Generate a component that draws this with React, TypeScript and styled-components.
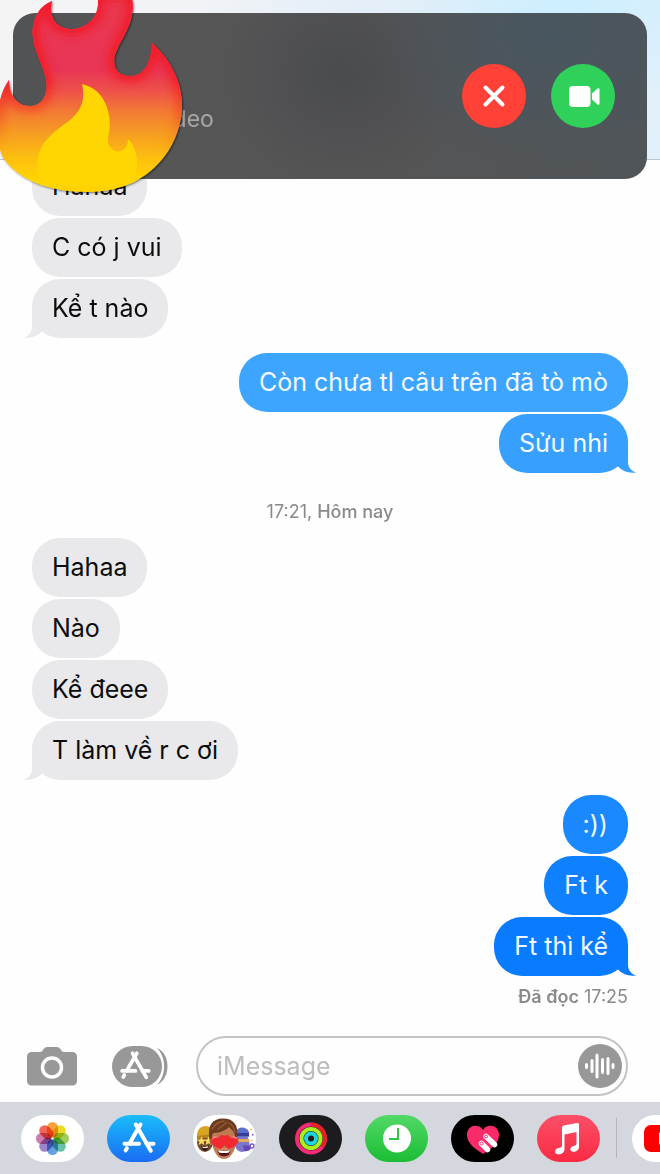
import React from "react";
import styled, { createGlobalStyle } from "styled-components";

const GlobalStyle = createGlobalStyle`
  * { box-sizing: border-box; }
  body {
    margin: 0;
    background: #fefefe;
    font-family: Inter, "Liberation Sans", sans-serif;
    overflow-x: hidden;
  }
  button { border: 0; padding: 0; background: none; cursor: pointer; }
`;

const Screen = styled.div`
  position: relative;
  min-height: 100vh;
  display: flex;
  flex-direction: column;
  overflow: hidden;
`;

const NavBar = styled.header`
  position: absolute;
  top: 0;
  left: 0;
  right: 0;
  height: 160px;
  border-bottom: 1px solid #bcc5ce;
  background:
    radial-gradient(ellipse 26% 70% at 86% 0, #cbeeff 0, rgba(203, 238, 255, 0) 100%),
    linear-gradient(90deg, #f4f4f5 0, #f1f3f6 30%, #e3eef8 55%, #e1f0fb 100%);
`;

const CallBanner = styled.section`
  position: absolute;
  z-index: 2;
  top: 13px;
  left: 13px;
  right: 13px;
  height: 166px;
  padding: 0 32px 0 27px;
  display: flex;
  align-items: center;
  gap: 25px;
  border-radius: 22px;
  background:
    radial-gradient(ellipse 28% 80% at 84% 12%, #48565f 0, rgba(72, 86, 95, 0) 100%),
    radial-gradient(ellipse 20% 70% at 52% 36%, #4a4b4f 0, rgba(74, 75, 79, 0) 100%),
    linear-gradient(90deg, #525355 0, #565657 20%, #555555 60%, #505559 100%);
`;

const CallKind = styled.p`
  flex: 1;
  margin: 46px 0 0;
  font-size: 23px;
  line-height: 30px;
  color: #a5a5a6;
`;

const CallButton = styled.button<{ $color: string }>`
  width: 64px;
  height: 64px;
  border-radius: 50%;
  background: ${(p) => p.$color};
  svg { display: block; }
`;

const FlameSticker = styled.svg`
  position: absolute;
  z-index: 3;
  top: 0;
  left: 0;
  pointer-events: none;
`;

const Thread = styled.main`
  flex: 1;
  padding: 157px 32px 0;
  display: flex;
  flex-direction: column;
`;

const Group = styled.div<{ $mine?: boolean }>`
  display: flex;
  flex-direction: column;
  align-items: ${(p) => (p.$mine ? "flex-end" : "flex-start")};
  gap: 2px;
  margin-bottom: 15px;
`;

const BubbleBox = styled.div<{ $tone: string; $mine?: boolean }>`
  position: relative;
  padding: 0 20px;
  border-radius: 28px;
  font-size: 25px;
  line-height: 59px;
  white-space: nowrap;
  background: ${(p) => p.$tone};
  color: ${(p) => (p.$mine ? "#f4faff" : "#0c0c0d")};
`;

const Tail = styled.svg<{ $mine?: boolean }>`
  position: absolute;
  bottom: 0;
  ${(p) => (p.$mine ? "right: -8px; transform: scaleX(-1);" : "left: -8px;")}
`;

const Stamp = styled.p`
  margin: 13px 0 15px;
  text-align: center;
  font-size: 18px;
  line-height: 22px;
  color: #8a8a8d;
  b { font-weight: 500; }
`;

const Receipt = styled.p`
  margin: -5px 0 0;
  text-align: right;
  font-size: 18px;
  line-height: 22px;
  color: #8a8a8d;
  b { font-weight: 600; }
`;

const Composer = styled.form`
  display: flex;
  align-items: center;
  padding: 0 32px 6px 27px;
`;

const ToolButton = styled.button`
  margin-right: 35px;
  svg { display: block; }
  & + & { margin-right: 28px; }
`;

const Field = styled.label`
  flex: 1;
  min-width: 0;
  height: 60px;
  padding: 0 4px 0 19px;
  display: flex;
  align-items: center;
  border: 2px solid #c3c3c5;
  border-radius: 30px;
`;

const FieldInput = styled.input`
  flex: 1;
  min-width: 0;
  border: 0;
  outline: 0;
  padding: 0;
  background: none;
  font: inherit;
  font-size: 25px;
  line-height: 32px;
  color: #0c0c0d;
  &::placeholder { color: #bdbdbf; opacity: 1; }
`;

const VoiceButton = styled.button`
  width: 44px;
  height: 44px;
  svg { display: block; }
`;

const AppStrip = styled.nav`
  display: flex;
  align-items: center;
  gap: 23px;
  height: 72px;
  padding-left: 21px;
  overflow: hidden;
  background: #d5d7de;
`;

const AppPill = styled.button<{ $fill: string }>`
  flex: none;
  width: 63px;
  height: 47px;
  border-radius: 24px;
  overflow: hidden;
  background: ${(p) => p.$fill};
  svg { display: block; }
`;

const Divider = styled.span`
  flex: none;
  width: 1px;
  height: 40px;
  margin: 0 -8px 0 -7px;
  background: #b3b5bb;
`;

type BubbleProps = { text: string; mine?: boolean; tone?: string; tail?: boolean };

function Bubble({ text, mine, tone = "#e9e9eb", tail }: BubbleProps) {
  return (
    <BubbleBox $tone={tone} $mine={mine}>
      {tail && (
        <Tail $mine={mine} width="28" height="30" viewBox="0 0 28 30" aria-hidden="true">
          <path d="M8 0V19C8 24 5 28 0 29.4C7 30.6 14 28 18 23.5L28 0Z" fill={tone} />
        </Tail>
      )}
      {text}
    </BubbleBox>
  );
}

function Flame() {
  const body =
    "M97 -6C102 14 89 29 70 29C57 28 48 18 52 1C39 6 32 19 32.500 34C33 52 45 66 46.500 84C47 98 40 106 30 106C17 106 9 95 9 80C2 90 -2 103 -2 118C-3 138 -1 151 4 159C20 181 51 192 88 192C122 192 148 178 164 157C176 141 182 123 182 103C181 80 170 59 152 43C151 63 144 76 130 76C117 76 112 66 115 55C119 42 130 30 132 14C134 5 132 -2 130 -6Z";
  return (
    <FlameSticker width="200" height="204" viewBox="0 0 200 204" role="img" aria-label="Fire">
      <defs>
        <linearGradient id="fl" gradientUnits="userSpaceOnUse" x1="0" y1="0" x2="0" y2="192">
          <stop offset="0" stopColor="#e93a4e" />
          <stop offset=".36" stopColor="#e83456" />
          <stop offset=".47" stopColor="#ee5049" />
          <stop offset=".58" stopColor="#f27a34" />
          <stop offset=".7" stopColor="#f79e22" />
          <stop offset=".82" stopColor="#fdbe10" />
          <stop offset=".92" stopColor="#ffd203" />
        </linearGradient>
        <linearGradient id="rim" gradientUnits="userSpaceOnUse" x1="0" y1="0" x2="0" y2="192">
          <stop offset="0" stopColor="#f01e2e" />
          <stop offset=".42" stopColor="#f2202a" />
          <stop offset=".62" stopColor="#f4541f" stopOpacity=".6" />
          <stop offset=".8" stopColor="#fa9010" stopOpacity="0" />
        </linearGradient>
        <clipPath id="flc"><path d={body} /></clipPath>
        <filter id="soft" x="-20%" y="-20%" width="140%" height="140%"><feGaussianBlur stdDeviation="4" /></filter>
        <filter id="sh" x="-20%" y="-20%" width="140%" height="140%">
          <feDropShadow dx="1" dy="1" stdDeviation="1" floodColor="#000" floodOpacity=".55" />
        </filter>
      </defs>
      <path d={body} fill="url(#fl)" filter="url(#sh)" />
      <g clipPath="url(#flc)">
        <path d={body} fill="none" stroke="url(#rim)" strokeWidth="13" filter="url(#soft)" />
        <path
          d="M82 84C101 88 110 106 110 126C109 134 107 139 109 145C112 151 118 153 123 150C127 147 128 143 128 139C136 146 139 162 136 174L136 186L40 186L38 172C36 154 40 142 62 126C77 116 87 105 82 84Z"
          fill="#ffd502"
        />
      </g>
    </FlameSticker>
  );
}

function StoreStrokes() {
  return (
    <g stroke="#fff" strokeWidth="4" strokeLinecap="round" fill="none">
      <path d="M33.500 9.500L22.500 28.500M19.900 33.200L18.700 35.400M28.800 9.500L43.800 35.800" />
      <path d="M17.500 28.700H32M39.500 28.700H46.500" />
    </g>
  );
}

function PhotosIcon() {
  const petals = ["#f7941d", "#e8d400", "#8fc63d", "#4cb79b", "#4a90d9", "#8a6fc0", "#c4659e", "#ee4b3a"];
  return (
    <svg width="63" height="47" viewBox="0 0 63 47">
      {petals.map((c, i) => (
        <rect key={c} x="26" y="7" width="11" height="15.500" rx="5.500" fill={c} fillOpacity=".85"
          transform={`rotate(${i * 45} 31.500 23.500)`} style={{ mixBlendMode: "multiply" }} />
      ))}
    </svg>
  );
}

function MemojiIcon() {
  const heart = "M0 13C-5 10 -8 7 -7.500 3C-7 -1 -2 -2 0 2C2 -2 7 -1 7.500 3C8 7 5 10 0 13Z";
  const star = "M0 -4.500L1.300 -1.500L4.500 -1.300L2 .8L2.800 4L0 2.200L-2.800 4L-2 .8L-4.500 -1.300L-1.300 -1.500Z";
  return (
    <svg width="63" height="47" viewBox="0 0 63 47">
      <ellipse cx="12" cy="27" rx="8" ry="10" fill="#79502f" />
      <path d="M4 22C3 8 20 8 20 19L19 23Z" fill="#d7a520" />
      <path d="M4 21L20 19V22L4 24Z" fill="#b7841a" />
      <path d={star} transform="translate(8.500 26)" fill="#ffdc62" />
      <path d={star} transform="translate(15.500 26)" fill="#ffdc62" />
      <path d="M8 31Q12 33 16 30Q15 36 12 36Q9 36 8 31Z" fill="#3b1d15" />
      <path d="M9 31.500Q12 33 15 31L14.500 33H10Z" fill="#fff" />
      <ellipse cx="49" cy="28" rx="7.500" ry="9" fill="#7d74cc" />
      <path d="M43 17C44 11 54 11 56 17V22H43Z" fill="#5c70c7" />
      <path d="M43 18H56V21H43Z" fill="#363d92" />
      <path d="M44 24H56V27H45Z" fill="#e4ac58" />
      <path d="M50 30Q55 31 58 30Q59 37 51 36Z" fill="#6348b5" />
      <circle cx="59" cy="31" r="2" fill="none" stroke="#7658c8" strokeWidth="1.500" />
      <path d="M57 14h1.500v1.500h-1.500zM58 25h1.500v1.500h-1.500z" fill="#edb543" />
      <path d="M59 19h1.500v1.500h-1.500z" fill="#6348b5" />
      <ellipse cx="18.500" cy="26" rx="2" ry="3.500" fill="#a9623d" />
      <ellipse cx="43.500" cy="26" rx="2" ry="3.500" fill="#a9623d" />
      <path d="M18 18C18 8 44 8 44 20C44 32 39 44 31 44C23 44 18 32 18 18Z" fill="#c07a52" />
      <path d="M23 30Q31 36 39 30Q38 42 31 43Q24 42 23 30Z" fill="#cf8b62" />
      <path d="M16.500 24C14 11 19 3.500 30 3.500C41 3.500 46 11 44 22L42 22C42 17 39 15 36 12C31 17 24 18 20 18C19 20 19 22 18.500 24Z" fill="#6b3a20" />
      <path d="M19 14Q23 7 31 6M25 14Q30 11 34 7M36 8Q41 11 42 17" stroke="#955c34" strokeWidth="1.400" fill="none" strokeLinecap="round" />
      <path d="M24.500 34.500Q31 37 37.500 34.500Q37 41.500 31 41.500Q25 41.500 24.500 34.500Z" fill="#54151b" />
      <path d="M25 35Q31 37 37 35L36 37.500Q31 38.500 26 37.500Z" fill="#fff" />
      <path d={heart} transform="translate(25 21.500) rotate(-12)" fill="#f32932" />
      <path d={heart} transform="translate(38 21.500) rotate(12)" fill="#f32932" />
      <path d="M20 23.500Q21 21.500 23 22M40 22Q42 21.500 43 23.500" stroke="#ff8890" strokeWidth="1.500" fill="none" strokeLinecap="round" />
    </svg>
  );
}

const apps: { name: string; fill: string; icon: React.ReactNode }[] = [
  { name: "Photos", fill: "#fff", icon: <PhotosIcon /> },
  {
    name: "App Store",
    fill: "linear-gradient(#19bdfb, #1a6cf3)",
    icon: <svg width="63" height="47" viewBox="0 0 63 47"><StoreStrokes /></svg>,
  },
  { name: "Memoji", fill: "#fff", icon: <MemojiIcon /> },
  {
    name: "Activity",
    fill: "#1c1c1e",
    icon: (
      <svg width="63" height="47" viewBox="0 0 63 47" fill="none" strokeWidth="4">
        <circle cx="32" cy="23.500" r="14" stroke="#f52b78" />
        <path d="M32 9.500A14 14 0 0 1 43 32" stroke="#e32125" />
        <circle cx="32" cy="23.500" r="9.500" stroke="#a8ee21" />
        <circle cx="32" cy="23.500" r="5" stroke="#1fd6df" />
      </svg>
    ),
  },
  {
    name: "Clock",
    fill: "linear-gradient(#52d967, #1bbd34)",
    icon: (
      <svg width="63" height="47" viewBox="0 0 63 47">
        <circle cx="32" cy="23.500" r="14" fill="#fff" />
        <path d="M33 13V24H24" stroke="#2fc648" strokeWidth="2" fill="none" />
      </svg>
    ),
  },
  {
    name: "Digital Touch",
    fill: "#000",
    icon: (
      <svg width="63" height="47" viewBox="0 0 63 47">
        <path d="M32 39C24 34 16 28 16 20C16 10 28 8 32 15C36 8 48 10 48 20C48 28 40 34 32 39Z" fill="#fb2b69" />
        <path d="M35 21.500L43.500 29.500M30.500 28.500L36.500 34.500" stroke="#fff" strokeWidth="5.500" strokeLinecap="round" />
        <circle cx="35" cy="21.500" r="1.500" fill="none" stroke="#fb2b69" />
        <circle cx="30.500" cy="28.500" r="1.500" fill="none" stroke="#fb2b69" />
      </svg>
    ),
  },
  {
    name: "Music",
    fill: "linear-gradient(#fb5068, #fa2a43)",
    icon: (
      <svg width="63" height="47" viewBox="0 0 63 47" fill="#fff">
        <path d="M25 12.500Q25 11 26.500 10.500L40 8Q42 7.500 42 9.500V31.500C42 35 39 37 36 36.800C33 36.500 32.500 33 35 31.500C37 30.500 39.500 31 39.500 28V17L27.500 19.500V34C27.500 37.500 24.500 39.500 21 39.300C17.500 39 17 35 20 33.500C22.500 32.500 25 33 25 30Z" />
      </svg>
    ),
  },
];

export default function App() {
  return (
    <Screen>
      <GlobalStyle />
      <NavBar />
      <CallBanner aria-label="Incoming call">
        <CallKind>FaceTime Video</CallKind>
        <CallButton type="button" $color="#ff4137" aria-label="Decline">
          <svg width="64" height="64" viewBox="0 0 64 64">
            <path d="M23.500 23.500L40.500 40.500M40.500 23.500L23.500 40.500" stroke="#fff" strokeWidth="4" strokeLinecap="round" />
          </svg>
        </CallButton>
        <CallButton type="button" $color="#30d15a" aria-label="Accept">
          <svg width="64" height="64" viewBox="0 0 64 64" fill="#fff">
            <rect x="18" y="22" width="21.500" height="21" rx="4" />
            <path d="M41 29.500L46.500 24.500Q48.500 23.500 48.500 25.500V39.500Q48.500 41.500 46.500 40.500L41 35.500Z" />
          </svg>
        </CallButton>
      </CallBanner>
      <Flame />

      <Thread>
        <Group>
          <Bubble text="Hahaa" />
          <Bubble text="C có j vui" />
          <Bubble text="Kể t nào" tail />
        </Group>
        <Group $mine>
          <Bubble text="Còn chưa tl câu trên đã tò mò" mine tone="#3da5fe" />
          <Bubble text="Sửu nhi" mine tone="#379ffe" tail />
        </Group>
        <Stamp>17:21, <b>Hôm nay</b></Stamp>
        <Group>
          <Bubble text="Hahaa" />
          <Bubble text="Nào" />
          <Bubble text="Kể đeee" />
          <Bubble text="T làm về r c ơi" tail />
        </Group>
        <Group $mine>
          <Bubble text=":))" mine tone="#1a88fe" />
          <Bubble text="Ft k" mine tone="#1081fe" />
          <Bubble text="Ft thì kể" mine tone="#097bfe" tail />
        </Group>
        <Receipt><b>Đã đọc</b> 17:25</Receipt>
      </Thread>

      <Composer>
        <ToolButton type="button" aria-label="Camera">
          <svg width="50" height="39" viewBox="0 0 50 39">
            <path d="M5 5H13Q15 5 16 3Q17.500 0 20 0H30Q32.500 0 34 3Q35 5 37 5H45Q50 5 50 10V33.500Q50 38.500 45 38.500H5Q0 38.500 0 33.500V10Q0 5 5 5Z" fill="#989898" />
            <circle cx="25" cy="20.500" r="9.500" fill="none" stroke="#fff" strokeWidth="3.500" />
          </svg>
        </ToolButton>
        <ToolButton type="button" aria-label="Apps">
          <svg width="56" height="41" viewBox="0 0 56 41">
            <rect width="50" height="41" rx="20.500" fill="#989898" />
            <path d="M45 2C59 8 59 32 45 39C54 30 55 12 45 2Z" fill="#989898" />
            <g transform="translate(-6 -1.500) scale(.92)"><StoreStrokes /></g>
          </svg>
        </ToolButton>
        <Field>
          <FieldInput type="text" placeholder="iMessage" aria-label="iMessage" />
          <VoiceButton type="button" aria-label="Record audio">
            <svg width="44" height="44" viewBox="0 0 44 44">
              <circle cx="22" cy="22" r="22" fill="#989898" />
              <path d="M8.500 20.500V23.500M14 16.500V27.500M19 11V33M24.500 15.500V28.500M30 14.500V29.500M35 20.500V23.500" stroke="#fff" strokeWidth="3" strokeLinecap="round" />
            </svg>
          </VoiceButton>
        </Field>
      </Composer>

      <AppStrip aria-label="iMessage apps">
        {apps.map((a) => (
          <AppPill key={a.name} type="button" $fill={a.fill} aria-label={a.name}>{a.icon}</AppPill>
        ))}
        <Divider />
        <AppPill type="button" $fill="#fff" aria-label="YouTube">
          <svg width="63" height="47" viewBox="0 0 63 47">
            <rect x="12" y="10" width="39" height="27" rx="7" fill="#fe0000" />
            <path d="M27 17.500L38 23.500L27 29.500Z" fill="#fff" />
          </svg>
        </AppPill>
      </AppStrip>
    </Screen>
  );
}
